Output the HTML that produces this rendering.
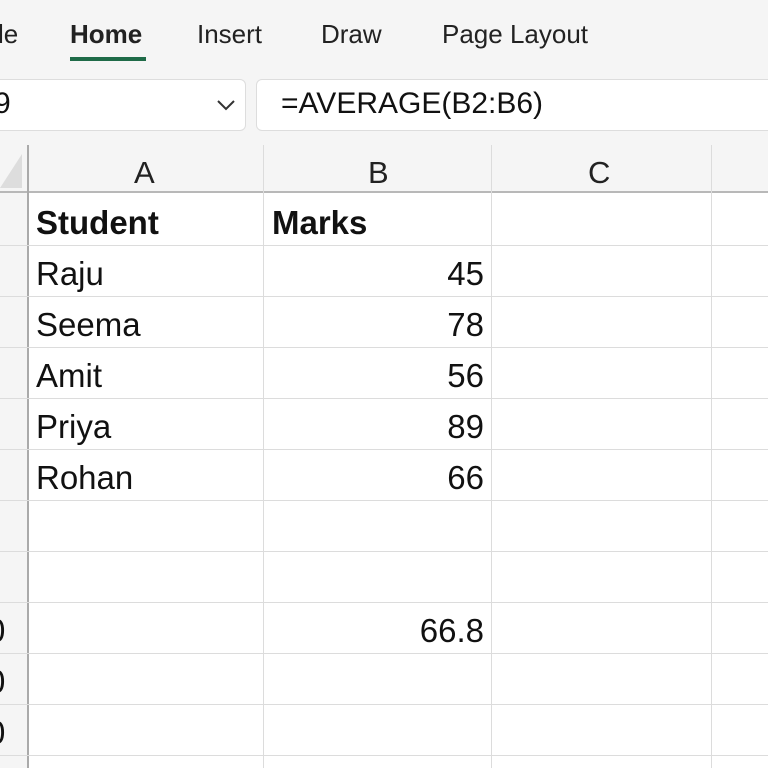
<!DOCTYPE html>
<html><head><meta charset="utf-8"><style>
body{margin:0;width:768px;height:768px;overflow:hidden;background:#fff;font-family:"Liberation Sans",sans-serif;position:relative}
.a{position:absolute}
.tab{position:absolute;top:19px;font-size:26px;color:#222}
.h{position:absolute;top:145px;height:48px;background:#f5f5f5;left:0;width:768px;border-bottom:2px solid #b8b8b8;box-sizing:border-box}
.vl{position:absolute;width:1px;background:#dcdcdc}
.hl{position:absolute;height:1px;background:#dcdcdc;left:0;width:768px}
.t{position:absolute;font-size:33px;color:#111;line-height:51px}
</style></head><body>
<div class="a" style="left:0;top:0;width:768px;height:145px;background:#f5f5f5"></div>
<div class="tab" style="left:-2px">le</div>
<div class="tab" style="left:70px;font-weight:bold;color:#222">Home</div>
<div class="a" style="left:70px;top:57px;width:76px;height:4px;background:#1f6b48"></div>
<div class="tab" style="left:197px">Insert</div>
<div class="tab" style="left:321px">Draw</div>
<div class="tab" style="left:442px">Page Layout</div>
<div class="a" style="left:-10px;top:79px;width:256px;height:52px;background:#fff;border:1px solid #ddd;border-radius:6px;box-sizing:border-box"></div>
<div class="a" style="left:-6px;top:87px;font-size:30px;color:#111">9</div>
<svg class="a" style="left:216px;top:99px" width="20" height="12"><path d="M2 2 L10 10 L18 2" fill="none" stroke="#333" stroke-width="2"/></svg>
<div class="a" style="left:256px;top:79px;width:520px;height:52px;background:#fff;border:1px solid #ddd;border-radius:6px;box-sizing:border-box"></div>
<div class="a" style="left:281px;top:87px;font-size:30px;color:#111">=AVERAGE(B2:B6)</div>
<div class="h"></div>
<svg class="a" style="left:0;top:152px" width="24" height="38"><polygon points="22,2 22,36 0,36" fill="#ddd"/></svg>
<div class="a" style="left:0;top:193px;width:27px;height:575px;background:#f5f5f5"></div>
<div class="a" style="left:27px;top:145px;width:2px;height:623px;background:#aaa"></div>
<div class="vl" style="left:263px;top:145px;height:623px"></div>
<div class="vl" style="left:491px;top:145px;height:623px"></div>
<div class="vl" style="left:711px;top:145px;height:623px"></div>
<div class="a" style="left:134px;top:155px;font-size:31px;color:#222">A</div>
<div class="a" style="left:368px;top:155px;font-size:31px;color:#222">B</div>
<div class="a" style="left:588px;top:155px;font-size:31px;color:#222">C</div>
<div class="hl" style="top:245px"></div><div class="hl" style="top:296px"></div><div class="hl" style="top:347px"></div><div class="hl" style="top:398px"></div><div class="hl" style="top:449px"></div><div class="hl" style="top:500px"></div><div class="hl" style="top:551px"></div><div class="hl" style="top:602px"></div><div class="hl" style="top:653px"></div><div class="hl" style="top:704px"></div><div class="hl" style="top:755px"></div>
<div class="t" style="left:36px;top:197px;font-weight:bold">Student</div>
<div class="t" style="left:272px;top:197px;font-weight:bold">Marks</div>
<div class="t" style="left:36px;top:248px">Raju</div>
<div class="t" style="left:36px;top:299px">Seema</div>
<div class="t" style="left:36px;top:350px">Amit</div>
<div class="t" style="left:36px;top:401px">Priya</div>
<div class="t" style="left:36px;top:452px">Rohan</div>
<div class="t" style="right:284px;top:248px">45</div>
<div class="t" style="right:284px;top:299px">78</div>
<div class="t" style="right:284px;top:350px">56</div>
<div class="t" style="right:284px;top:401px">89</div>
<div class="t" style="right:284px;top:452px">66</div>
<div class="t" style="right:284px;top:605px">66.8</div>
<div class="t" style="left:-13px;top:605px">0</div>
<div class="t" style="left:-13px;top:656px">0</div>
<div class="t" style="left:-13px;top:707px">0</div>
</body></html>
